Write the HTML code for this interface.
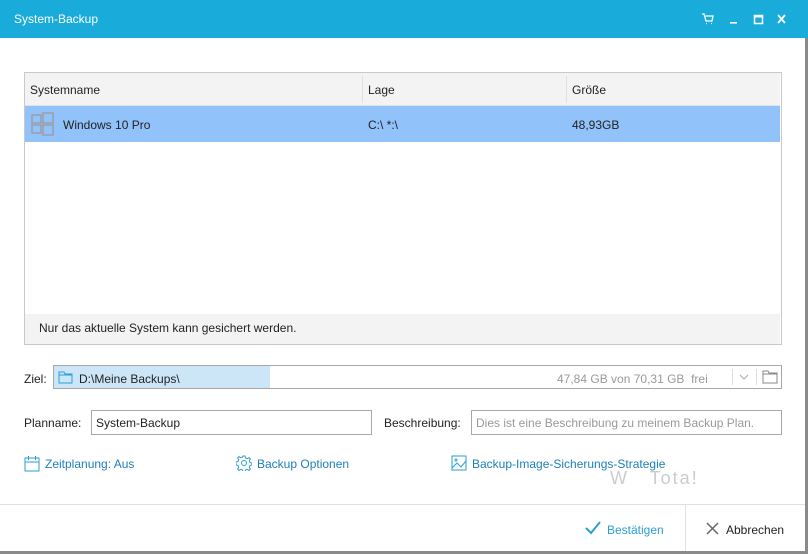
<!DOCTYPE html>
<html><head><meta charset="utf-8"><style>
*{margin:0;padding:0;box-sizing:border-box}
body{width:808px;height:554px;background:#fff;font-family:"Liberation Sans",sans-serif;font-size:12px;color:#222;position:relative;overflow:hidden}
.a{position:absolute}
.t{white-space:nowrap}
.blue{color:#1d7fb8}
</style></head><body>
<div class="a" style="left:0;top:0;width:808px;height:38px;background:#19acda"></div>
<div class="a t" style="left:14px;top:12px;color:#fff;font-size:12px">System-Backup</div>
<svg class="a" style="left:700px;top:12px" width="100" height="14" viewBox="0 0 100 14">
<path d="M2 2h2l2 7h6l1-5H5M6 11.5h1M11 11.5h1" stroke="#fff" stroke-width="1.3" fill="none"/>
<rect x="30" y="10" width="7" height="1.6" fill="#fff"/>
<rect x="54.5" y="3.5" width="8" height="8" stroke="#fff" stroke-width="1.5" fill="none"/><rect x="54" y="3" width="9" height="2.5" fill="#fff"/>
<path d="M78 3l7 8M85 3l-7 8" stroke="#fff" stroke-width="1.8"/>
</svg>
<div class="a" style="left:805px;top:38px;width:3px;height:516px;background:#8a8a8a"></div>
<div class="a" style="left:0;top:551px;width:808px;height:3px;background:#8a8a8a"></div>
<!-- table -->
<div class="a" style="left:24px;top:72px;width:758px;height:273px;border:1px solid #c9c9c9;background:#fff"></div>
<div class="a" style="left:25px;top:73px;width:755px;height:33px;background:#f3f3f3;border-bottom:1px solid #e3e3e3"></div>
<div class="a" style="left:362px;top:76px;width:1px;height:27px;background:#e0e0e0"></div>
<div class="a" style="left:566px;top:76px;width:1px;height:27px;background:#e0e0e0"></div>
<div class="a t" style="left:30px;top:83px">Systemname</div>
<div class="a t" style="left:368px;top:83px">Lage</div>
<div class="a t" style="left:572px;top:83px">Größe</div>
<div class="a" style="left:25px;top:106px;width:755px;height:36px;background:#92c2fa"></div>
<svg class="a" style="left:31px;top:112px" width="24" height="24" viewBox="0 0 24 24" fill="none" stroke="#9a9ea6" stroke-width="1.5">
<rect x="1" y="3" width="9" height="8"/><rect x="12" y="1" width="10" height="10"/><rect x="1" y="13" width="9" height="8"/><rect x="12" y="13" width="10" height="10"/></svg>
<div class="a t" style="left:63px;top:118px">Windows 10 Pro</div>
<div class="a t" style="left:368px;top:118px">C:\ *:\</div>
<div class="a t" style="left:572px;top:118px">48,93GB</div>
<div class="a" style="left:25px;top:314px;width:755px;height:30px;background:#f3f3f3"></div>
<div class="a t" style="left:39px;top:321px">Nur das aktuelle System kann gesichert werden.</div>
<!-- Ziel -->
<div class="a t" style="left:24px;top:372px">Ziel:</div>
<div class="a" style="left:53px;top:365px;width:729px;height:24px;border:1px solid #a8a8a8"></div>
<div class="a" style="left:54px;top:366px;width:216px;height:22px;background:#cce6f8"></div>
<svg class="a" style="left:58px;top:370px" width="15" height="14" viewBox="0 0 15 14" fill="none" stroke="#2a9fd6"><path d="M1 2h5l1 2h7v9H1zM1 5h13"/></svg>
<div class="a t" style="left:79px;top:372px">D:\Meine Backups\</div>
<div class="a t" style="left:557px;top:372px;color:#999">47,84 GB von 70,31 GB&nbsp; frei</div>
<div class="a" style="left:732px;top:369px;width:1px;height:16px;background:#ddd"></div>
<div class="a" style="left:756px;top:369px;width:1px;height:16px;background:#ddd"></div>
<svg class="a" style="left:738px;top:373px" width="12" height="8"><path d="M2 2l4 4 4-4" stroke="#aaa" fill="none"/></svg>
<svg class="a" style="left:762px;top:370px" width="16" height="14" fill="none" stroke="#888"><path d="M1 1h5l1 2h8v10H1zM1 4h14"/></svg>
<!-- Planname -->
<div class="a t" style="left:24px;top:416px">Planname:</div>
<div class="a" style="left:91px;top:410px;width:281px;height:25px;border:1px solid #a8a8a8"></div>
<div class="a t" style="left:96px;top:416px">System-Backup</div>
<div class="a t" style="left:384px;top:416px">Beschreibung:</div>
<div class="a" style="left:471px;top:410px;width:311px;height:25px;border:1px solid #a8a8a8"></div>
<div class="a t" style="left:476px;top:416px;color:#999">Dies ist eine Beschreibung zu meinem Backup Plan.</div>
<!-- links -->
<svg class="a" style="left:24px;top:455px" width="16" height="17" fill="none" stroke="#2a9fd6"><rect x="1" y="3" width="14" height="13"/><path d="M1 7h14M4.5 1v4M11.5 1v4"/></svg>
<div class="a t blue" style="left:45px;top:457px">Zeitplanung: Aus</div>
<svg class="a" style="left:236px;top:455px" width="16" height="16" viewBox="0 0 16 16" fill="none" stroke="#2a9fd6"><circle cx="8" cy="8" r="2.5"/><path d="M7 1h2l.5 2 1.7.7 1.8-1.1 1.4 1.4-1.1 1.8.7 1.7 2 .5v2l-2 .5-.7 1.7 1.1 1.8-1.4 1.4-1.8-1.1-1.7.7-.5 2H7l-.5-2-1.7-.7-1.8 1.1-1.4-1.4 1.1-1.8-.7-1.7-2-.5V7l2-.5.7-1.7L1.6 3 3 1.6l1.8 1.1 1.7-.7z"/></svg>
<div class="a t blue" style="left:257px;top:457px">Backup Optionen</div>
<svg class="a" style="left:451px;top:455px" width="16" height="16" fill="none" stroke="#2a9fd6"><rect x="1" y="1" width="14" height="14"/><path d="M1 13l5-5 4 4 5-6"/><circle cx="5" cy="5" r="1"/></svg>
<div class="a t blue" style="left:472px;top:457px">Backup-Image-Sicherungs-Strategie</div>
<div class="a t" style="left:610px;top:468px;color:#ccc;font-size:18px;letter-spacing:2px">W&nbsp;&nbsp; Tota!</div>
<!-- footer -->
<div class="a" style="left:0;top:504px;width:805px;height:1px;background:#e0e0e0"></div>
<div class="a" style="left:685px;top:505px;width:1px;height:46px;background:#e0e0e0"></div>
<svg class="a" style="left:585px;top:521px" width="16" height="14" fill="none" stroke="#2a9fd6" stroke-width="2"><path d="M1 7l5 5 9-11"/></svg>
<div class="a t blue" style="left:607px;top:523px;color:#2a9fd6">Bestätigen</div>
<svg class="a" style="left:706px;top:522px" width="13" height="13" stroke="#666" stroke-width="1.5"><path d="M1 1l11 11M12 1L1 12"/></svg>
<div class="a t" style="left:726px;top:523px">Abbrechen</div>
</body></html>
